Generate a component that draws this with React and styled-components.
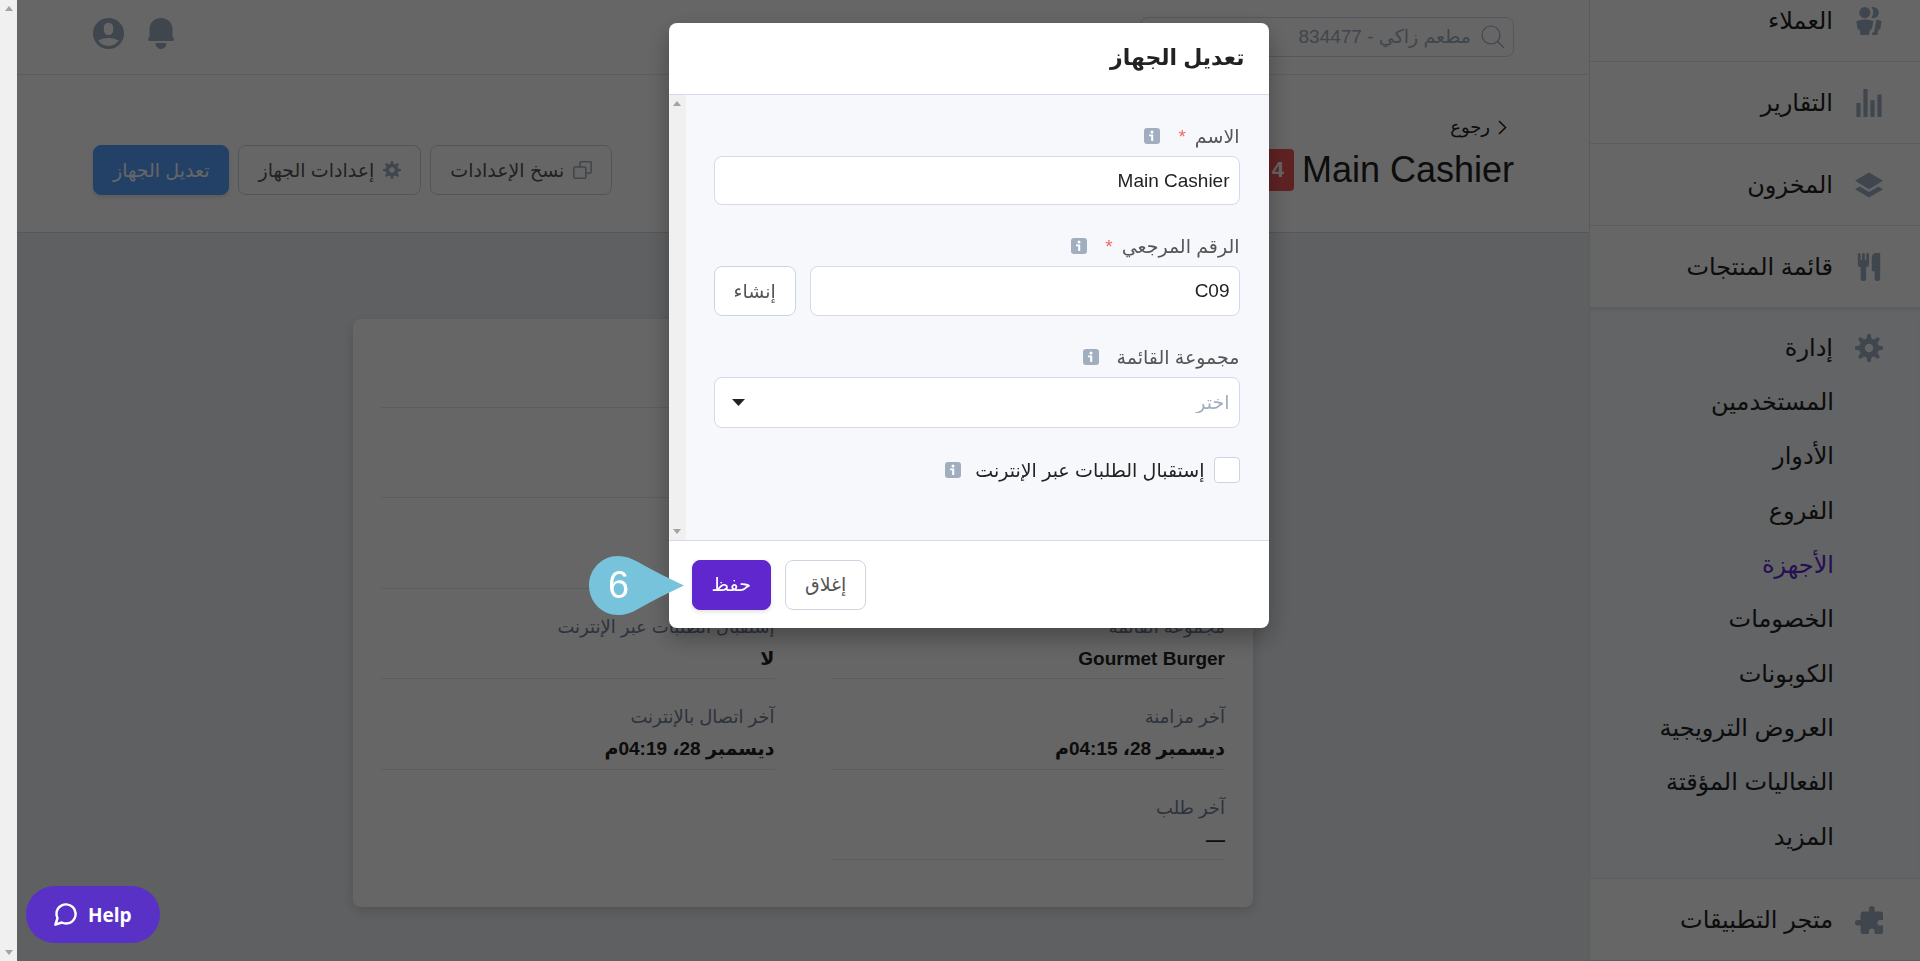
import { useState } from 'react';
import styled, { createGlobalStyle } from 'styled-components';

const GlobalStyle = createGlobalStyle`
	*, *::before, *::after {
		box-sizing: border-box;
	}
	body {
		margin: 0;
		background-color: #eef0f5;
		color: #222;
		font-family: 'Liberation Sans', 'DejaVu Sans', sans-serif;
		font-size: 19px;
	}
	button, input, select {
		font: inherit;
		color: inherit;
	}
	h1, h2, dl, dd, ul {
		margin: 0;
		padding: 0;
	}
	a {
		color: inherit;
		text-decoration: none;
	}
`;

const Page = styled.div`
	display: flex;
	height: 100vh;
	overflow: hidden;
`;

const ScrollTrack = styled.div`
	flex: none;
	width: 17px;
	background-color: #f0f0f0;
	display: flex;
	flex-direction: column;
	justify-content: space-between;
	align-items: center;
	padding: 6px 0;
`;

const Main = styled.main`
	flex: 1;
	min-width: 0;
	display: flex;
	flex-direction: column;
`;

const Sidebar = styled.nav`
	flex: none;
	width: 331px;
	background-color: #fff;
	border-left: 1px solid #e2e8f0;
	font-size: 24px;
	svg {
		color: #a0aec0;
	}
`;

const NavItem = styled.a`
	display: flex;
	align-items: center;
	gap: 22px;
	height: ${({ $cut }) => ($cut ? '62px' : '82px')};
	padding: 0 37px ${({ $cut }) => ($cut ? '20px' : '0')} 0;
	border-bottom: 1px solid #e2e8f0;
`;

const NavGroup = styled.div`
	padding: 13px 0 14px;
	background-color: #f7fafc;
	border-bottom: 1px solid #e2e8f0;
	box-shadow: inset 0 4px 4px -2px rgba(0, 0, 0, 0.08);
`;

const NavGroupHead = styled.a`
	display: flex;
	align-items: center;
	gap: 22px;
	height: 54px;
	padding-right: 37px;
`;

const SubNav = styled.ul`
	display: grid;
	grid-auto-rows: 1fr;
	height: 489px;
	list-style: none;
`;

const SubItem = styled.li`
	display: flex;
	align-items: center;
	padding-right: 86px;
	color: ${({ $active }) => ($active ? '#5f27cd' : 'inherit')};
`;

const TopBar = styled.header`
	display: flex;
	align-items: center;
	justify-content: space-between;
	height: 75px;
	padding: 0 75px 0 76px;
	background-color: #fff;
	border-bottom: 1px solid #e2e8f0;
`;

const SearchBox = styled.label`
	display: flex;
	align-items: center;
	gap: 10px;
	width: 374px;
	height: 40px;
	padding: 0 8px;
	border: 1px solid #d5d9ea;
	border-radius: 8px;
	color: #a0aec0;
`;

const SearchInput = styled.input`
	flex: 1;
	min-width: 0;
	border: 0;
	outline: none;
	padding: 0;
	background-color: transparent;
	&::placeholder {
		color: #a0aec0;
		opacity: 1;
	}
`;

const TopActions = styled.div`
	display: flex;
	align-items: center;
	gap: 24px;
	padding-bottom: 8px;
`;

const IconButton = styled.button`
	display: flex;
	padding: 0;
	border: 0;
	background: none;
	color: #a0aec0;
	cursor: pointer;
`;

const PageHead = styled.section`
	display: flex;
	align-items: flex-end;
	justify-content: space-between;
	height: 158px;
	padding: 0 75px 37px 76px;
	background-color: #fff;
	border-bottom: 1px solid #d5d9ea;
`;

const BackLink = styled.a`
	display: flex;
	align-items: center;
	gap: 8px;
	margin-bottom: 2px;
	padding-right: 7px;
	font-size: 18px;
	line-height: 32px;
`;

const TitleRow = styled.div`
	display: flex;
	align-items: center;
	gap: 8px;
`;

const Title = styled.h1`
	font-size: 36px;
	font-weight: 400;
	line-height: 50px;
`;

const Badge = styled.span`
	padding: 0 10px;
	border-radius: 4px;
	background-color: #ee5659;
	color: #fff;
	font-size: 22px;
	font-weight: 700;
	line-height: 42px;
`;

const ButtonRow = styled.div`
	display: flex;
	gap: 9px;
`;

const Button = styled.button`
	display: flex;
	align-items: center;
	justify-content: center;
	gap: 9px;
	height: 50px;
	padding: 0 19px;
	border: 1px solid ${({ $fill }) => $fill || '#cbd5e0'};
	border-radius: 8px;
	background-color: ${({ $fill }) => $fill || '#fff'};
	color: ${({ $fill }) => ($fill ? '#fff' : '#555')};
	box-shadow: ${({ $fill }) => ($fill ? '0 2px 4px rgba(0, 0, 0, 0.12)' : 'none')};
	white-space: nowrap;
	cursor: pointer;
	svg {
		color: #a0aec0;
	}
`;

const Card = styled.section`
	width: 100%;
	max-width: 900px;
	margin: 86px auto 0;
	padding: 16px 28px 47px;
	border-radius: 8px;
	background-color: #fff;
	box-shadow: 0 4px 12px rgba(0, 0, 0, 0.14);
`;

const Details = styled.dl`
	display: grid;
	grid-template-columns: 1fr 1fr;
	grid-auto-rows: 1fr;
	gap: 18px 57px;
	height: 525px;
`;

const Detail = styled.div`
	padding-top: 4px;
	border-bottom: 1px solid #e2e8f0;
	line-height: 32px;
	dt {
		color: #718096;
		font-size: 18px;
	}
	dd {
		font-weight: 700;
	}
`;

const Overlay = styled.div`
	position: fixed;
	inset: 0 0 0 17px;
	display: flex;
	justify-content: center;
	align-items: flex-start;
	padding-top: 23px;
	background-color: rgba(0, 0, 0, 0.6);
`;

const Modal = styled.form`
	width: 600px;
	border-radius: 8px;
	background-color: #fff;
	box-shadow: 0 10px 25px rgba(0, 0, 0, 0.3);
`;

const ModalHead = styled.div`
	height: 72px;
	padding: 0 24px;
	border-bottom: 1px solid #d5d9ea;
`;

const ModalTitle = styled.h2`
	font-size: 22px;
	font-weight: 700;
	line-height: 70px;
`;

const ModalBody = styled.div`
	display: flex;
	height: 445px;
	background-color: #f7f8fc;
`;

const Fields = styled.div`
	flex: 1;
	min-width: 0;
	display: flex;
	flex-direction: column;
	padding: 29px 29px 29px 28px;
`;

const Field = styled.div`
	display: flex;
	flex-direction: column;
	margin-bottom: 29px;
`;

const LabelRow = styled.div`
	display: flex;
	align-items: center;
	height: 32px;
	padding-bottom: 8px;
	gap: 18px;
	color: #555;
`;

const Required = styled.span`
	margin-right: 9px;
	color: #f56565;
`;

const InputRow = styled.div`
	display: flex;
	gap: 14px;
`;

const TextInput = styled.input`
	flex: 1;
	min-width: 0;
	min-height: 49px;
	padding: 0 9px;
	border: 1px solid #d5d9ea;
	border-radius: 8px;
	background-color: #fff;
	outline: none;
`;

const SelectWrap = styled.div`
	position: relative;
	display: flex;
	svg {
		position: absolute;
		left: 18px;
		top: 22px;
		pointer-events: none;
	}
`;

const Select = styled.select`
	flex: 1;
	height: 51px;
	padding: 0 9px;
	border: 1px solid #d5d9ea;
	border-radius: 8px;
	background-color: #fff;
	color: #a0aec0;
	appearance: none;
	outline: none;
`;

const CheckRow = styled.div`
	display: flex;
	align-items: center;
	height: 26px;
	gap: 14px;
`;

const CheckLabel = styled.label`
	display: flex;
	align-items: center;
	gap: 9px;
`;

const Checkbox = styled.input`
	width: 26px;
	height: 26px;
	margin: 0;
	border: 1px solid #cbd5e0;
	border-radius: 4px;
	background-color: #fff;
	appearance: none;
	&:checked {
		background-color: #5f27cd;
	}
`;

const ModalFoot = styled.div`
	display: flex;
	justify-content: flex-end;
	align-items: center;
	gap: 14px;
	height: 88px;
	padding: 0 23px;
	border-top: 1px solid #d5d9ea;
`;

const SaveSpot = styled.div`
	position: relative;
`;

const StepMarker = styled.div`
	position: absolute;
	right: calc(100% + 7px);
	top: -4px;
	width: 96px;
	height: 60px;
	display: flex;
	align-items: center;
	color: #fff;
	font-size: 38px;
	direction: ltr;
	svg {
		position: absolute;
		inset: 0;
	}
	span {
		position: relative;
		width: 60px;
		text-align: center;
	}
`;

const HelpButton = styled.button`
	position: fixed;
	left: 26px;
	bottom: 18px;
	display: flex;
	align-items: center;
	gap: 9px;
	height: 57px;
	padding: 0 28px 0 26px;
	border: 0;
	border-radius: 29px;
	background-color: #5a31c6;
	color: #fff;
	font-family: 'Open Sans', sans-serif;
	font-weight: 700;
	direction: ltr;
	cursor: pointer;
`;

const ICONS = {
	users:
		'M7 8a4 4 0 1 1 0-8 4 4 0 0 1 0 8zm0 1c2.15 0 4.2.4 6.1 1.09L12 16h-1.25L10 20H4l-.75-4H2L.9 10.09A17.93 17.93 0 0 1 7 9zm8.31.17c1.32.18 2.59.48 3.8.92L18 16h-1.25L16 20h-3.96l.37-2h1.25l1.65-8.83zM13 0a4 4 0 1 1-1.33 7.76 5.96 5.96 0 0 0 0-7.52C12.1.1 12.53 0 13 0z',
	chart: 'M1 10h3v10H1V10zM6 0h3v20H6V0zm5 8h3v12h-3V8zm5-4h3v16h-3V4z',
	layers: 'M10 1l10 6-10 6L0 7l10-6zm6.67 10L20 13l-10 6-10-6 3.33-2L10 15l6.67-4z',
	food: 'M18 11v7a2 2 0 0 1-4 0v-5h-2V3a3 3 0 0 1 3-3h3v11zM4 10a2 2 0 0 1-2-2V1a1 1 0 0 1 2 0v4h1V1a1 1 0 0 1 2 0v4h1V1a1 1 0 0 1 2 0v7a2 2 0 0 1-2 2v8a2 2 0 0 1-4 0v-8z',
	cog: 'M3.94 6.5L2.22 3.64l1.42-1.42L6.5 3.94c.52-.3 1.1-.54 1.7-.7L9 0h2l.8 3.24c.6.16 1.18.4 1.7.7l2.86-1.72 1.42 1.42-1.72 2.86c.3.52.54 1.1.7 1.7L20 9v2l-3.24.8c-.16.6-.4 1.18-.7 1.7l1.72 2.86-1.42 1.42-2.86-1.72c-.52.3-1.1.54-1.7.7L11 20H9l-.8-3.24c-.6-.16-1.18-.4-1.7-.7l-2.86 1.72-1.42-1.42 1.72-2.86c-.3-.52-.54-1.1-.7-1.7L0 11V9l3.24-.8c.16-.6.4-1.18.7-1.7zM10 13a3 3 0 1 0 0-6 3 3 0 0 0 0 6z',
	puzzle:
		'M20 14v4a2 2 0 0 1-2 2h-4v-2a2 2 0 0 0-2-2 2 2 0 0 0-2 2v2H6a2 2 0 0 1-2-2v-4H2a2 2 0 0 1-2-2 2 2 0 0 1 2-2h2V6c0-1.1.9-2 2-2h4V2a2 2 0 0 1 2-2 2 2 0 0 1 2 2v2h4a2 2 0 0 1 2 2v4h-2a2 2 0 0 0-2 2 2 2 0 0 0 2 2h2z',
	user: 'M10 20a10 10 0 1 1 0-20 10 10 0 0 1 0 20zM7 6v2a3 3 0 1 0 6 0V6a3 3 0 1 0-6 0zm-3.65 8.44a8 8 0 0 0 13.3 0 15.94 15.94 0 0 0-13.3 0z',
};

const Icon = ({ name, size = 28 }) => (
	<svg width={size} height={size} viewBox='0 0 20 20' fill='currentColor' aria-hidden='true'>
		<path d={ICONS[name]} />
	</svg>
);

const BellIcon = () => (
	<svg width='26' height='31' viewBox='0 0 26 31' fill='currentColor' aria-hidden='true'>
		<path d='M13 0C6 0 1.500 5 1.500 11v7.500c0 .8-1.500 1.300-1.500 2.800 0 1 .5 1.700 1.500 1.700h23c1 0 1.500-.7 1.500-1.700 0-1.500-1.500-2-1.500-2.800V11C24.500 5 20 0 13 0z' />
		<path d='M7.500 25h11c0 3.500-2.300 6-5.500 6s-5.500-2.500-5.500-6z' />
	</svg>
);

const CopyIcon = () => (
	<svg width='19' height='18' viewBox='0 0 19 18' fill='none' stroke='currentColor' strokeWidth='1.600' aria-hidden='true'>
		<path d='M7 6V1.800a1 1 0 0 1 1-1h9.200a1 1 0 0 1 1 1V11a1 1 0 0 1-1 1H13' />
		<rect x='0.800' y='6' width='12' height='11.200' rx='1' />
	</svg>
);

const SearchIcon = () => (
	<svg width='24' height='24' viewBox='0 0 24 24' fill='none' stroke='currentColor' strokeWidth='1.200' aria-hidden='true'>
		<circle cx='10' cy='10' r='9' />
		<path d='M16.500 16.500L23 23' />
	</svg>
);

const ChevronIcon = () => (
	<svg width='9' height='15' viewBox='0 0 9 15' fill='none' stroke='currentColor' strokeWidth='1.600' aria-hidden='true'>
		<path d='M1 1l6.500 6.500L1 14' />
	</svg>
);

const InfoIcon = () => (
	<svg width='16' height='16' viewBox='0 0 16 16' aria-hidden='true'>
		<rect width='16' height='16' rx='3' fill='#a0aec0' />
		<circle cx='8' cy='4' r='1.500' fill='#fff' />
		<path d='M5 6.500h4.200V13H7.200V8.300H5z' fill='#fff' />
	</svg>
);

const Arrow = ({ down }) => (
	<svg width='8' height='5' viewBox='0 0 8 5' fill='#a3a3a3' aria-hidden='true'>
		<path d={down ? 'M0 0h8L4 5z' : 'M0 5h8L4 0z'} />
	</svg>
);

const ScrollBar = () => (
	<ScrollTrack>
		<Arrow />
		<Arrow down />
	</ScrollTrack>
);

const mainNav = [
	{ icon: 'users', text: 'العملاء', cut: true },
	{ icon: 'chart', text: 'التقارير' },
	{ icon: 'layers', text: 'المخزون' },
	{ icon: 'food', text: 'قائمة المنتجات' },
];

const manageNav = [
	'المستخدمين',
	'الأدوار',
	'الفروع',
	'الأجهزة',
	'الخصومات',
	'الكوبونات',
	'العروض الترويجية',
	'الفعاليات المؤقتة',
	'المزيد',
];

// the first three rows have no values yet
const details = [
	[],
	[],
	[],
	[],
	[],
	[],
	['مجموعة القائمة', 'Gourmet Burger'],
	['إستقبال الطلبات عبر الإنترنت', 'لا'],
	['آخر مزامنة', 'ديسمبر 28، 04:15م'],
	['آخر اتصال بالإنترنت', 'ديسمبر 28، 04:19م'],
	['آخر طلب', '—'],
];

export default function App() {
	const [name, setName] = useState('Main Cashier');
	const [reference, setReference] = useState('C09');
	const [online, setOnline] = useState(false);

	return (
		<>
			<GlobalStyle />
			<Page dir='rtl'>
				<Sidebar>
					{mainNav.map((item) => (
						<NavItem key={item.icon} href='#' $cut={item.cut}>
							<Icon name={item.icon} />
							{item.text}
						</NavItem>
					))}
					<NavGroup>
						<NavGroupHead href='#'>
							<Icon name='cog' />
							إدارة
						</NavGroupHead>
						<SubNav>
							{manageNav.map((text) => (
								<SubItem key={text} $active={text === 'الأجهزة'}>
									<a href='#'>{text}</a>
								</SubItem>
							))}
						</SubNav>
					</NavGroup>
					<NavItem href='#'>
						<Icon name='puzzle' />
						متجر التطبيقات
					</NavItem>
				</Sidebar>

				<Main>
					<TopBar>
						<SearchBox>
							<SearchIcon />
							<SearchInput placeholder='مطعم زاكي - 834477' aria-label='مطعم زاكي' />
						</SearchBox>
						<TopActions>
							<IconButton type='button'>
								<BellIcon />
							</IconButton>
							<IconButton type='button'>
								<Icon name='user' size={31} />
							</IconButton>
						</TopActions>
					</TopBar>

					<PageHead>
						<div>
							<BackLink href='#'>
								<ChevronIcon />
								رجوع
							</BackLink>
							<TitleRow>
								<Title>Main Cashier</Title>
								<Badge>4</Badge>
							</TitleRow>
						</div>
						<ButtonRow>
							<Button type='button'>
								<CopyIcon />
								نسخ الإعدادات
							</Button>
							<Button type='button'>
								<Icon name='cog' size={18} />
								إعدادات الجهاز
							</Button>
							<Button type='button' $fill='#58a0ff'>
								تعديل الجهاز
							</Button>
						</ButtonRow>
					</PageHead>

					<Card>
						<Details>
							{details.map(([label, value], i) => (
								<Detail key={i}>
									<dt>{label}</dt>
									<dd>{value}</dd>
								</Detail>
							))}
						</Details>
					</Card>
				</Main>

				<ScrollBar />

				<Overlay>
					<Modal onSubmit={(e) => e.preventDefault()}>
						<ModalHead>
							<ModalTitle>تعديل الجهاز</ModalTitle>
						</ModalHead>
						<ModalBody>
							<Fields>
								<Field>
									<LabelRow>
										<label htmlFor='name'>
											الاسم<Required>*</Required>
										</label>
										<InfoIcon />
									</LabelRow>
									<InputRow>
										<TextInput id='name' value={name} onChange={(e) => setName(e.target.value)} />
									</InputRow>
								</Field>
								<Field>
									<LabelRow>
										<label htmlFor='reference'>
											الرقم المرجعي<Required>*</Required>
										</label>
										<InfoIcon />
									</LabelRow>
									<InputRow>
										<TextInput
											id='reference'
											value={reference}
											onChange={(e) => setReference(e.target.value)}
										/>
										<Button type='button'>إنشاء</Button>
									</InputRow>
								</Field>
								<Field>
									<LabelRow>
										<label htmlFor='group'>مجموعة القائمة</label>
										<InfoIcon />
									</LabelRow>
									<SelectWrap>
										<Select id='group'>
											<option>اختر</option>
										</Select>
										<svg width='13' height='7' viewBox='0 0 13 7' fill='#222' aria-hidden='true'>
											<path d='M0 0h13L6.500 7z' />
										</svg>
									</SelectWrap>
								</Field>
								<CheckRow>
									<CheckLabel>
										<Checkbox
											type='checkbox'
											checked={online}
											onChange={(e) => setOnline(e.target.checked)}
										/>
										إستقبال الطلبات عبر الإنترنت
									</CheckLabel>
									<InfoIcon />
								</CheckRow>
							</Fields>
							<ScrollBar />
						</ModalBody>
						<ModalFoot>
							<Button type='button'>إغلاق</Button>
							<SaveSpot>
								<Button type='submit' $fill='#5f27cd'>
									حفظ
								</Button>
								<StepMarker>
									<svg width='96' height='60' viewBox='0 0 96 60' fill='#78c3dc' aria-hidden='true'>
										<path d='M29 0C13 0 0 13 0 29.500S13 59 29 59c7 0 13-2 20-6 14-8 30-16 46-23.500C79 22 63 14 49 6 42 2 36 0 29 0z' />
									</svg>
									<span>6</span>
								</StepMarker>
							</SaveSpot>
						</ModalFoot>
					</Modal>
				</Overlay>

				<HelpButton type='button'>
					<svg
						width='27'
						height='27'
						viewBox='0 0 24 24'
						fill='none'
						stroke='currentColor'
						strokeWidth='2.200'
						strokeLinejoin='round'
						aria-hidden='true'
					>
						<path d='M21 11.500a8.380 8.380 0 0 1-.9 3.800 8.500 8.500 0 0 1-7.600 4.700 8.380 8.380 0 0 1-3.800-.9L3 21l1.900-5.700a8.380 8.380 0 0 1-.9-3.800 8.500 8.500 0 0 1 4.700-7.600 8.380 8.380 0 0 1 3.800-.9h.5a8.480 8.480 0 0 1 8 8v.5z' />
					</svg>
					Help
				</HelpButton>
			</Page>
		</>
	);
}
